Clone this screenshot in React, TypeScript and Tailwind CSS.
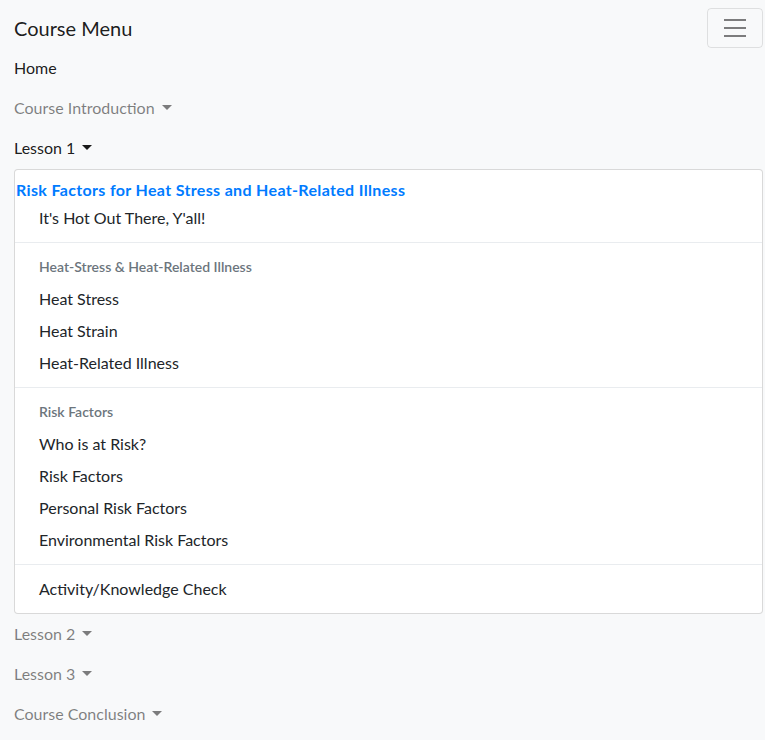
import { useState } from "react";

const LESSON_1 = [
  { type: "item", label: "It's Hot Out There, Y'all!" },
  { type: "divider" },
  { type: "header", label: "Heat-Stress & Heat-Related Illness" },
  { type: "item", label: "Heat Stress" },
  { type: "item", label: "Heat Strain" },
  { type: "item", label: "Heat-Related Illness" },
  { type: "divider" },
  { type: "header", label: "Risk Factors" },
  { type: "item", label: "Who is at Risk?" },
  { type: "item", label: "Risk Factors" },
  { type: "item", label: "Personal Risk Factors" },
  { type: "item", label: "Environmental Risk Factors" },
  { type: "divider" },
  { type: "item", label: "Activity/Knowledge Check" },
];

function Caret() {
  return (
    <span className="ml-[7px] inline-block align-[3px] border-x-[5px] border-t-[5px] border-x-transparent border-t-current" />
  );
}

function NavLink({ label, caret, active }: { label: string; caret?: boolean; active?: boolean }) {
  return (
    <a
      href="#"
      className={`flex items-center h-10 pb-px leading-6 ${active ? "text-black/90" : "text-black/50"}`}
    >
      {label}
      {caret && <Caret />}
    </a>
  );
}

export default function App() {
  const [open] = useState(true);

  return (
    <div
      className="min-h-[740px] bg-[#f8f9fa] text-[16px] text-[#212529]"
      style={{ fontFamily: '"Segoe UI", Lato, "Noto Sans", sans-serif' }}
    >
      <nav className="pt-2 pl-[14px] pr-[2px]">
        {/* brand + toggler */}
        <div className="flex items-center justify-between h-10">
          <a href="#" className="text-[20px] leading-[30px] text-black/90">
            Course Menu
          </a>
          <button className="w-[56px] h-10 flex items-center justify-center rounded border border-black/10">
            <svg width="30" height="30" viewBox="0 0 30 30">
              <path
                d="M4 7h22M4 15h22M4 23h22"
                stroke="rgba(0,0,0,0.5)"
                strokeWidth="2"
                strokeMiterlimit="10"
              />
            </svg>
          </button>
        </div>

        <ul className="flex flex-col">
          <li>
            <NavLink label="Home" active />
          </li>
          <li>
            <NavLink label="Course Introduction" caret />
          </li>
          <li>
            <NavLink label="Lesson 1" caret active />
            {open && (
              <div className="mt-px bg-white border border-black/15 rounded py-2">
                <a
                  href="#"
                  className="block pl-px h-6 leading-6 font-bold tracking-[0.34px] text-[#007bff]"
                >
                  Risk Factors for Heat Stress and Heat-Related Illness
                </a>
                {LESSON_1.map((entry, i) => {
                  if (entry.type === "divider")
                    return <div key={i} className="my-2 border-t border-[#e9ecef]" />;
                  if (entry.type === "header")
                    return (
                      <h6
                        key={i}
                        className="h-8 flex items-center pb-px px-6 text-[14px] font-semibold text-[#6c757d]"
                      >
                        {entry.label}
                      </h6>
                    );
                  return (
                    <a key={i} href="#" className="flex items-center h-8 pb-px px-6 text-[#212529]">
                      {entry.label}
                    </a>
                  );
                })}
              </div>
            )}
          </li>
          <li>
            <NavLink label="Lesson 2" caret />
          </li>
          <li>
            <NavLink label="Lesson 3" caret />
          </li>
          <li>
            <NavLink label="Course Conclusion" caret />
          </li>
        </ul>
      </nav>
    </div>
  );
}
